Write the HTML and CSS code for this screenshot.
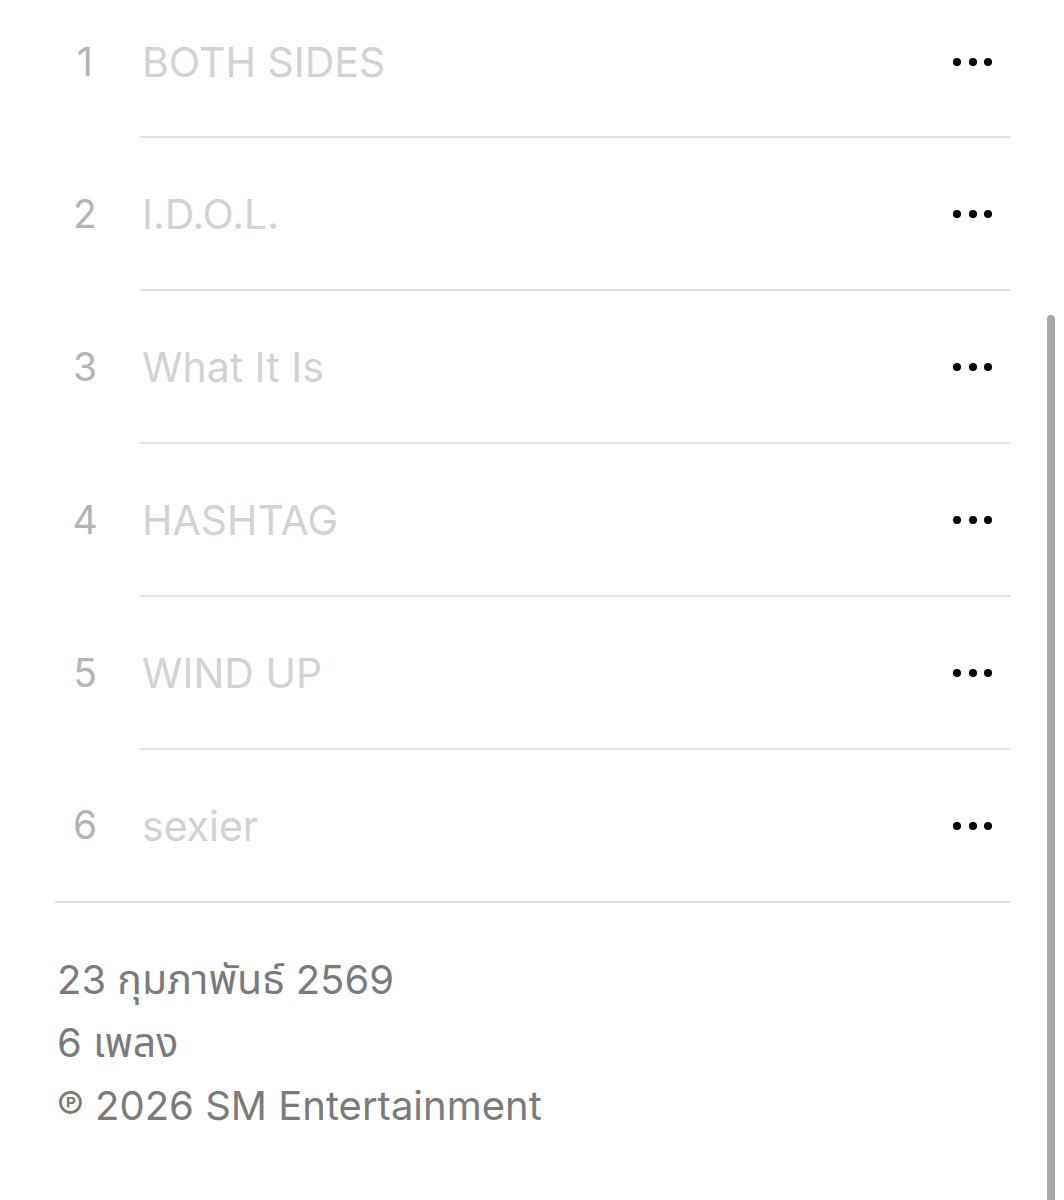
FILE: index.html
```html
<!DOCTYPE html>
<html lang="th">
<head>
<meta charset="utf-8">
<link rel="stylesheet" href="styles.css">
</head>
<body>
<div class="page">
  <ul class="tracks">
    <li class="row"><span class="num">1</span><div class="main"><span class="title">BOTH SIDES</span><span class="more"><i></i><i></i><i></i></span></div></li>
    <li class="row"><span class="num">2</span><div class="main"><span class="title">I.D.O.L.</span><span class="more"><i></i><i></i><i></i></span></div></li>
    <li class="row"><span class="num">3</span><div class="main"><span class="title">What It Is</span><span class="more"><i></i><i></i><i></i></span></div></li>
    <li class="row"><span class="num">4</span><div class="main"><span class="title">HASHTAG</span><span class="more"><i></i><i></i><i></i></span></div></li>
    <li class="row"><span class="num">5</span><div class="main"><span class="title">WIND UP</span><span class="more"><i></i><i></i><i></i></span></div></li>
    <li class="row last"><span class="num">6</span><div class="main"><span class="title">sexier</span><span class="more"><i></i><i></i><i></i></span></div></li>
  </ul>
  <div class="info">
    <p>23 <span class="thai">กุมภาพันธ์</span> 2569</p>
    <p>6 <span class="thai">เพลง</span></p>
    <p><span class="p-mark">℗</span> 2026 SM Entertainment</p>
  </div>
  <div class="scrollbar"></div>
</div>
</body>
</html>
```

FILE: styles.css
```css
html, body {
  margin: 0;
  padding: 0;
  background: #ffffff;
}
body {
  font-family: Inter, "Noto Sans Thai", "Noto Sans", sans-serif;
  overflow: hidden;
}
.page {
  position: relative;
  width: 1064px;
  height: 1200px;
  overflow: hidden;
}
.tracks {
  list-style: none;
  margin: -13px 54px 0 55px;
  padding: 0;
}
.row {
  display: flex;
  height: 153px;
}
.num {
  width: 60px;
  margin-right: 25px;
  flex: none;
  text-align: center;
  align-self: center;
  font-size: 39px;
  color: #b4b4b4;
  padding-bottom: 2px;
}
.main {
  flex: 1;
  display: flex;
  align-items: center;
  justify-content: space-between;
  border-bottom: 2px solid #e3e3e3;
  padding: 0 18px 0 2px;
}
.row.last {
  border-bottom: 2px solid #e3e3e3;
  height: 151px;
}
.row.last .main {
  border-bottom: none;
}
.row:first-child {
  height: 151px;
}
.title {
  font-size: 41px;
  color: #d2d2d2;
}
.more {
  display: flex;
  gap: 7.5px;
}
.more i {
  display: block;
  width: 8px;
  height: 8px;
  border-radius: 50%;
  background: #000;
}
.info {
  margin: 0 0 0 57px;
  padding-top: 45px;
  color: #7b7b7b;
  font-size: 40px;
  line-height: 63px;
}
.info p {
  margin: 0;
}
.thai {
  font-size: 41px;
}
.p-mark {
  font-size: 40px;
  vertical-align: 0;
}
.scrollbar {
  position: absolute;
  left: 1047px;
  top: 315px;
  width: 8px;
  height: 900px;
  border-radius: 4px;
  background: #a8a8a8;
}
```
